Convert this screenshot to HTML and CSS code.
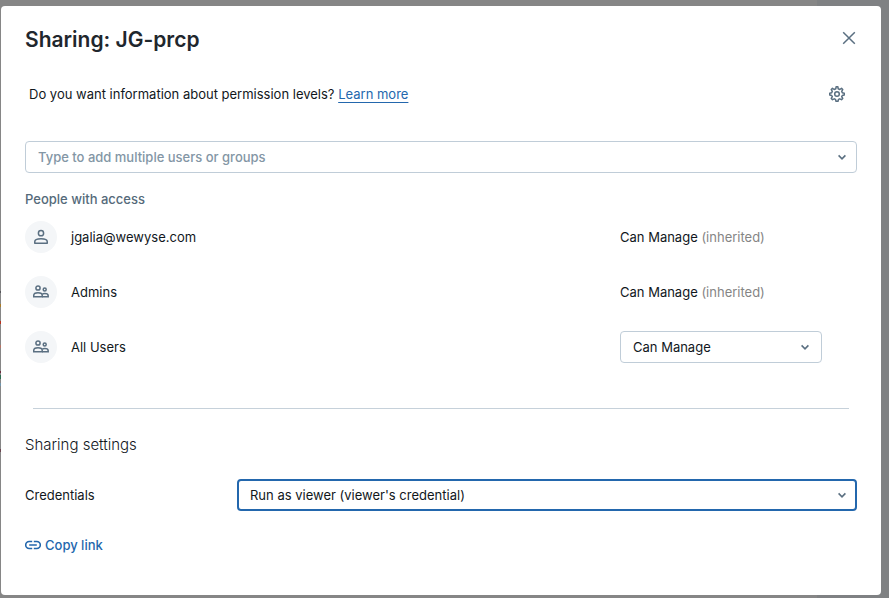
FILE: index.html
```html
<!DOCTYPE html>
<html lang="en">
<head>
<meta charset="utf-8">
<meta name="viewport" content="width=device-width, initial-scale=1">
<title>Sharing: JG-prcp</title>
<link rel="stylesheet" href="styles.css">
</head>
<body>
<svg class="sprite" aria-hidden="true">
  <symbol id="chevron" viewBox="0 0 16 16"><path d="M4.6 6.4 8 9.8l3.4-3.4" fill="none" stroke="currentColor" stroke-width="1.6"/></symbol>
  <symbol id="group" viewBox="0 0 16 16"><g fill="none" stroke="currentColor" stroke-width="1.5"><circle cx="5" cy="4" r="2.1"/><circle cx="11.7" cy="5.6" r="1.5"/><path d="M.75 12.75v-1.4C.75 9.7 2.5 8.7 5 8.7s4.2 1 4.2 2.6v1.45z"/><path d="M9.2 12.75h6v-1c0-1.4-1.4-2.2-3.4-2.2-1.1 0-2 .2-2.7.7"/></g></symbol>
</svg>
<main class="dialog" role="dialog" aria-labelledby="title">
  <header class="header">
    <h1 class="title" id="title">Sharing: JG-prcp</h1>
    <button class="icon-button" type="button" aria-label="Close">
      <svg class="icon" viewBox="0 0 16 16"><path d="M2.2 2.2l11.6 11.6M13.8 2.2 2.2 13.8" fill="none" stroke="currentColor" stroke-width="1.5"/></svg>
    </button>
  </header>

  <div class="info">
    <p class="info-text">Do you want information about permission levels? <a class="learn" href="#">Learn more</a></p>
    <button class="icon-button" type="button" aria-label="Settings">
      <svg class="icon" viewBox="0 0 16 16"><g fill="none" stroke="currentColor" stroke-width="1.5" stroke-linejoin="round"><path d="M6.8 2.8 7.1.8h1.8l.3 2 1.6.7 1.7-1.2 1.2 1.3-1 1.7.6 1.5 2 .5v1.7l-2 .5-.6 1.1 1 1.8-1.2 1.3-1.8-.9-1.2.6-.5 1.8H7l-.5-1.8-1.2-.6-1.8.9-1.2-1.3 1-1.8-.6-1.1-2-.5V7.3l2-.5.6-1.5-1-1.7 1.2-1.3 1.7 1.2z"/><circle cx="8" cy="8" r="2.3"/></g></svg>
    </button>
  </div>

  <div class="field">
    <input class="control search" type="text" aria-label="Add users or groups" placeholder="Type to add multiple users or groups">
    <svg class="icon chevron"><use href="#chevron"/></svg>
  </div>

  <section>
    <h2 class="label">People with access</h2>
    <ul class="people">
      <li class="person">
        <span class="avatar"><svg class="icon" viewBox="0 0 16 16"><g fill="none" stroke="currentColor" stroke-width="1.5"><circle cx="8" cy="4.2" r="2.6"/><path d="M1.75 14.25v-1.5c0-1.9 2.6-3 6.25-3s6.25 1.1 6.25 3v1.5z" stroke-linejoin="round"/></g></svg></span>
        <span>jgalia@wewyse.com</span>
        <span class="access">Can Manage <span class="inherited">(inherited)</span></span>
      </li>
      <li class="person">
        <span class="avatar"><svg class="icon"><use href="#group"/></svg></span>
        <span>Admins</span>
        <span class="access">Can Manage <span class="inherited">(inherited)</span></span>
      </li>
      <li class="person">
        <span class="avatar"><svg class="icon"><use href="#group"/></svg></span>
        <label for="all-users">All Users</label>
        <div class="access">
          <div class="field level">
            <select class="control" id="all-users"><option>Can Manage</option></select>
            <svg class="icon chevron"><use href="#chevron"/></svg>
          </div>
        </div>
      </li>
    </ul>
  </section>

  <hr class="divider">

  <section>
    <h2 class="section-title">Sharing settings</h2>
    <div class="setting">
      <label for="credentials">Credentials</label>
      <div class="field">
        <select class="control active" id="credentials"><option>Run as viewer (viewer's credential)</option></select>
        <svg class="icon chevron"><use href="#chevron"/></svg>
      </div>
    </div>
  </section>

  <button class="copy" type="button">
    <svg class="icon" viewBox="0 0 16 16"><path d="M7.2 4.5H4.2a3.5 3.5 0 0 0 0 7h3M8.8 4.5h3a3.5 3.5 0 0 1 0 7h-3M4.2 8h7.6" fill="none" stroke="currentColor" stroke-width="1.6"/></svg>
    Copy link
  </button>
</main>
</body>
</html>
```
FILE: styles.css
```css
* { box-sizing: border-box; }

body {
  margin: 0;
  padding: 6px 8px 3px 1px;
  min-height: 100vh;
  font: 13px/20px Inter, "Liberation Sans", sans-serif;
  color: #11171c;
  background:
    linear-gradient(#8880 291px, #55555a 291px 293px, #8880 293px 304px, #a97b28 304px 307px, #8880 307px 321px, #b8321f 321px 324px, #8880 324px 345px, #b57466 345px 348px, #8880 348px 371px, #6b2c3d 371px 373px, #8880 373px 375px, #2c6b50 375px 379px, #8880 379px 383px, #7195ac 383px 386px, #8880 386px 449px, #6b4650 449px 452px, #8880 452px) left top / 1px 100% no-repeat,
    linear-gradient(#7f8183, #7f8183) right top / 72px 100% no-repeat,
    #868686;
}

h1, h2, p, ul { margin: 0; padding: 0; font-weight: 400; }
button, input, select { font: inherit; color: inherit; }

.sprite { position: absolute; width: 0; height: 0; }

.dialog {
  padding: 18px 24px 40px;
  background: #fff;
  border-radius: 4px;
}

.icon { display: block; flex: none; width: 16px; height: 16px; }

.header, .info {
  display: flex;
  align-items: center;
  justify-content: space-between;
}

.title { font-size: 21px; line-height: 32px; font-weight: 600; color: #1f272d; }

.icon-button {
  padding: 8px;
  margin: 0;
  border: 0;
  background: none;
  color: #5a6f81;
}
.header .icon-button { margin: -4px -8px 0 0; }

.info { margin-top: 22px; padding: 0 4px; }
.learn {
  color: #2367ad;
  text-decoration: underline;
  text-underline-offset: 3px;
}

.field { position: relative; }
.info + .field { margin-top: 31px; }

.control {
  display: block;
  width: 100%;
  height: 32px;
  padding: 0 32px 0 12px;
  border: 1px solid #c0cdd8;
  border-radius: 4px;
  background: #fff;
  appearance: none;
  outline: none;
}
.search { font-weight: 500; }
.search::placeholder { color: #8396a5; opacity: 1; }
.active { border: 2px solid #2367ad; padding-left: 11px; }

.chevron {
  position: absolute;
  top: 8px;
  right: 7px;
  color: #5a6f81;
  pointer-events: none;
}
.level .chevron { right: 9px; }

.label { margin-top: 16px; font-size: 13px; font-weight: 500; color: #556a7a; }

.people {
  display: grid;
  gap: 23px;
  margin-top: 12px;
  list-style: none;
}
.person {
  display: grid;
  grid-template-columns: 32px 1fr 237px;
  align-items: center;
  column-gap: 14px;
}
.avatar {
  display: grid;
  place-items: center;
  height: 32px;
  border-radius: 50%;
  background: #f4f6f8;
  color: #5a6f81;
}
.inherited { color: #858585; }
.level { width: 202px; }

.divider {
  height: 1px;
  margin: 45px 8px 24px;
  border: 0;
  background: #c6d1da;
}

.section-title { font-size: 15px; line-height: 24px; font-weight: 300; }

.setting {
  display: grid;
  grid-template-columns: 212px 1fr;
  align-items: center;
  margin-top: 22px;
}

.copy {
  display: flex;
  align-items: center;
  gap: 4px;
  margin-top: 24px;
  padding: 0;
  border: 0;
  background: none;
  font-weight: 500;
  color: #2367ad;
}
```
